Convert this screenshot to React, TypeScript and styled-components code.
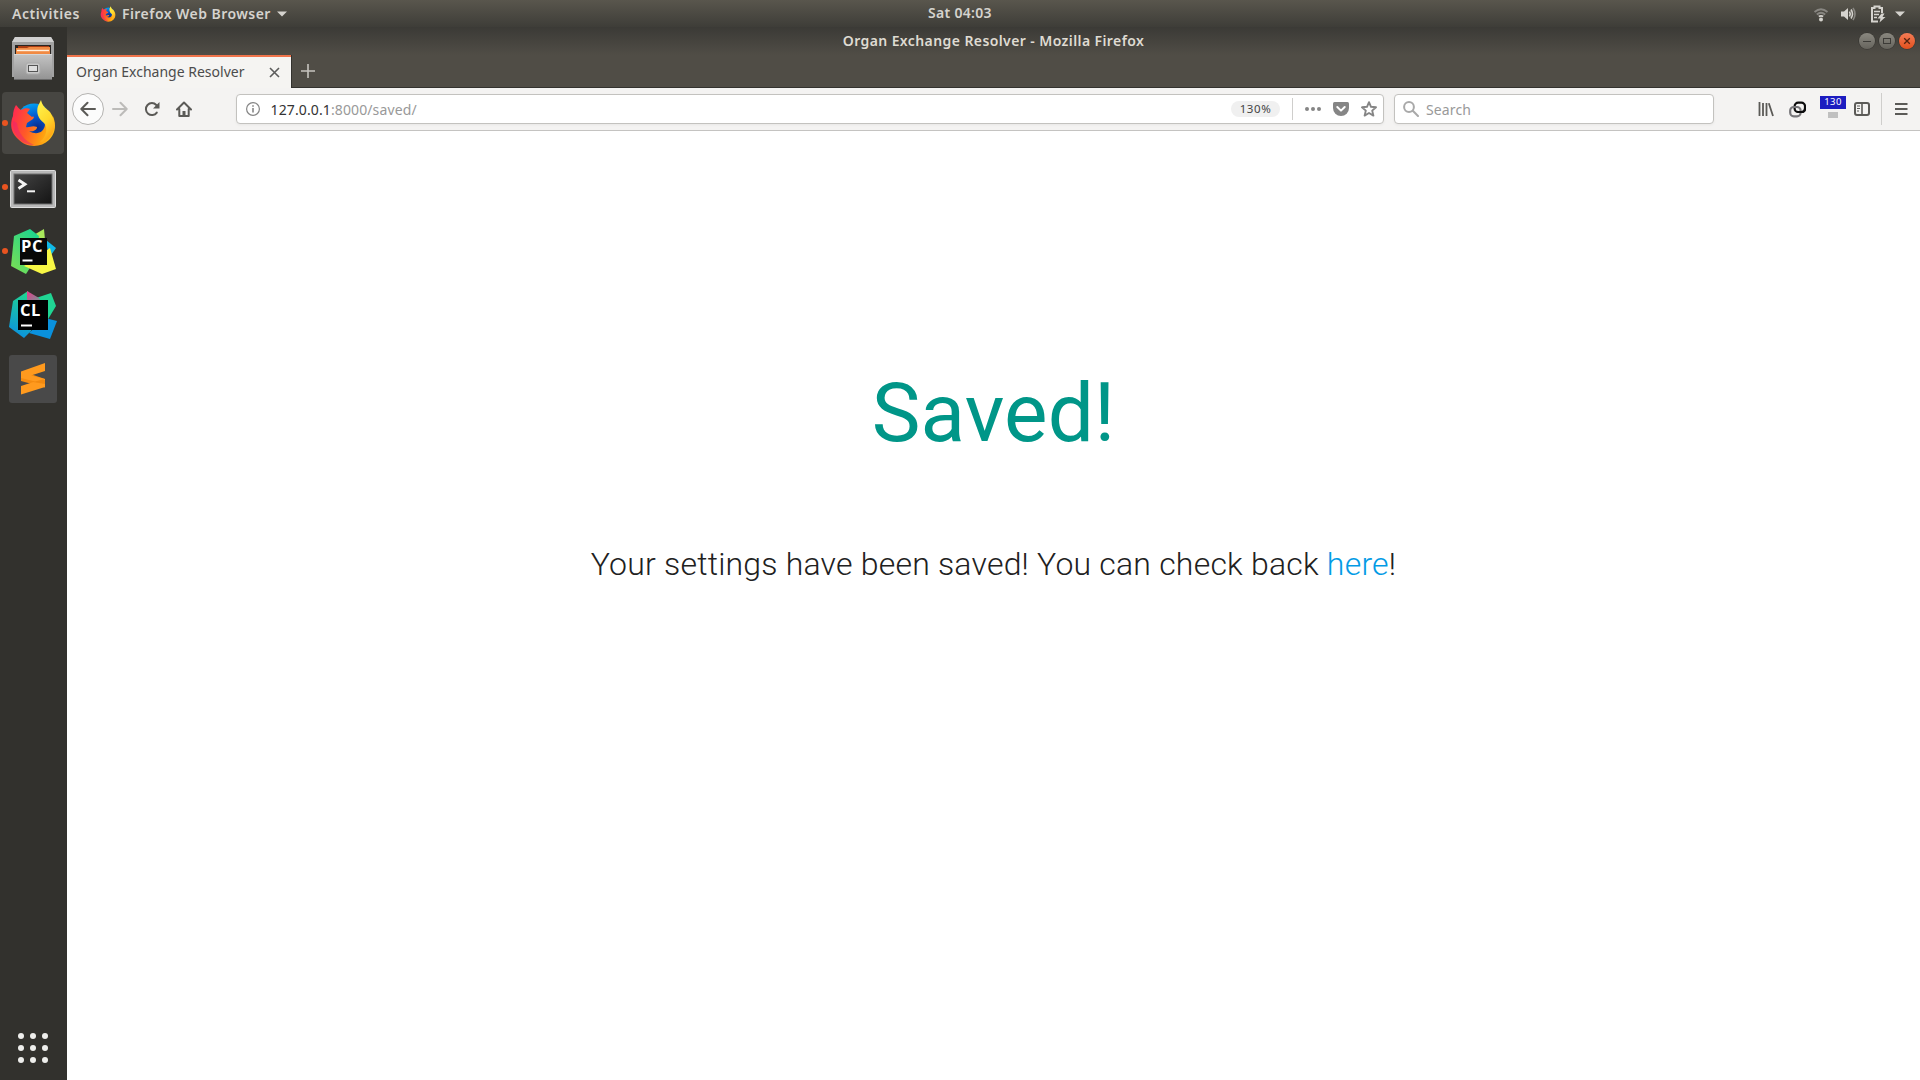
import React from "react";
import styled, { createGlobalStyle } from "styled-components";

const ui = `"Noto Sans", "Open Sans", sans-serif`;

const GlobalStyle = createGlobalStyle`
  * { box-sizing: border-box; }
  html, body { margin: 0; padding: 0; }
  body { font-family: ${ui}; overflow: hidden; background: #fff; }
  svg { display: block; flex: none; }
`;

const Desktop = styled.div`
  width: 1920px;
  height: 1080px;
  display: grid;
  grid-template: 27px 1fr / 67px 1fr;
`;

const TopBar = styled.header`
  grid-column: 1 / 3;
  display: grid;
  grid-template-columns: 1fr auto 1fr;
  align-items: center;
  background: linear-gradient(#59564d, #3e3d38);
  color: #d5d3ce;
`;

const BarSide = styled.div<{ $end?: boolean }>`
  display: flex;
  align-items: center;
  height: 27px;
  justify-content: ${(p) => (p.$end ? "flex-end" : "flex-start")};
  padding: ${(p) => (p.$end ? "0 15px 0 0" : "0 0 0 12px")};
`;

const Label = styled.span<{ $size?: number; $track?: number; $bold?: boolean }>`
  font-size: ${(p) => p.$size ?? 14}px;
  line-height: 20px;
  letter-spacing: ${(p) => p.$track ?? 0}px;
  font-weight: ${(p) => (p.$bold ? 600 : 400)};
  white-space: nowrap;
`;

const Clock = styled(Label)`
  padding-bottom: 2px;
`;

const AppMenu = styled.div`
  display: flex;
  align-items: center;
  margin-left: 20px;
  gap: 6px;
`;

const Tray = styled.div`
  display: grid;
  grid-template-columns: 27px 30px 25px 10px;
  align-items: center;
`;

const Dock = styled.nav`
  background: #32312d;
  display: flex;
  flex-direction: column;
  align-items: stretch;
`;

const DockItem = styled.div<{ $active?: boolean; $running?: boolean; $inset: number; $drop?: number }>`
  height: 62px;
  margin: 1px 3px 1px 2px;
  border-radius: 4px;
  display: flex;
  align-items: center;
  background: ${(p) => (p.$active ? "#474642" : "transparent")};
  &::before {
    content: "";
    width: 6px;
    height: 6px;
    border-radius: 50%;
    flex: none;
    background: ${(p) => (p.$running ? "#e95420" : "transparent")};
  }
  > svg {
    margin-left: ${(p) => p.$inset}px;
    margin-top: ${(p) => (p.$drop ?? 0) * 2}px;
  }
`;

const AppGrid = styled.div`
  margin: auto 0 17px 18px;
  display: grid;
  grid-template-columns: repeat(3, 6px);
  gap: 6px;
`;

const GridDot = styled.i`
  width: 6px;
  height: 6px;
  border-radius: 50%;
  background: #eeeeec;
`;

const Window = styled.main`
  display: flex;
  flex-direction: column;
  background: #fff;
`;

const TitleBar = styled.div`
  height: 28px;
  display: grid;
  grid-template-columns: 1fr auto 1fr;
  align-items: center;
  background: linear-gradient(#3b3a36, #504d46);
  color: #dfdbd2;
`;

const WindowButtons = styled.div`
  display: flex;
  justify-content: flex-end;
  gap: 4px;
  padding-right: 5px;
`;

const WindowButton = styled.span<{ $close?: boolean }>`
  width: 16px;
  height: 16px;
  border-radius: 50%;
  background: ${(p) => (p.$close ? "linear-gradient(#f47c56, #e2501d)" : "linear-gradient(#8a8880, #66645d)")};
  box-shadow: 0 0 0 0.6px #34332f;
`;

const TabStrip = styled.div`
  height: 33px;
  display: flex;
  background: #504d46;
  box-shadow: inset 0 -1px #33322e;
`;

const Tab = styled.div`
  width: 224px;
  border-top: 2px solid #f0744b;
  background: #f5f4f2;
  color: #4c4c4c;
  display: flex;
  align-items: center;
  justify-content: space-between;
  padding: 0 11px 1px 9px;
  box-shadow: 1px 0 #33322e;
`;

const NewTab = styled.div`
  padding: 9px 0 0 10px;
`;

const Toolbar = styled.div`
  height: 43px;
  display: flex;
  align-items: center;
  background: #f4f3f2;
  border-bottom: 1px solid #c4c3c1;
  padding-left: 5px;
`;

const BackButton = styled.div`
  width: 32px;
  height: 32px;
  border-radius: 50%;
  border: 1px solid #b4b3b1;
  background: #fcfcfc;
  display: flex;
  align-items: center;
  justify-content: center;
`;

const NavIcon = styled.div`
  width: 32px;
  display: flex;
  justify-content: center;
`;

const Field = styled.div<{ $width: number; $left: number }>`
  width: ${(p) => p.$width}px;
  margin-left: ${(p) => p.$left}px;
  height: 30px;
  border: 1px solid #c3c2bf;
  border-radius: 4px;
  background: #fff;
  box-shadow: 0 1px 3px rgba(0, 0, 0, 0.05);
  display: flex;
  align-items: center;
  color: #999;
`;

const FieldText = styled(Label)`
  flex: 1;
  padding-top: 2px;
  b { font-weight: 400; color: #333; }
`;

const Zoom = styled.div`
  width: 49px;
  height: 16px;
  border-radius: 8px;
  background: #f0f0f0;
  color: #444;
  display: flex;
  align-items: center;
  justify-content: center;
`;

const Divider = styled.i<{ $height: number; $margin: string }>`
  width: 1px;
  height: ${(p) => p.$height}px;
  margin: ${(p) => p.$margin};
  background: #cfcecc;
`;

const FieldIcon = styled.span<{ $margin: string }>`
  margin: ${(p) => p.$margin};
`;

const PageActions = styled.div`
  display: flex;
  align-items: center;
  gap: 12px;
  padding: 0 6px 0 12px;
`;

const Tools = styled.div`
  flex: 1;
  display: flex;
  align-items: center;
  justify-content: flex-end;
  padding-right: 12px;
`;

const Meter = styled.div`
  width: 26px;
  display: flex;
  flex-direction: column;
  align-items: center;
  margin: 0 8px 0 14px;
  padding-bottom: 5px;
  gap: 3px;
`;

const MeterValue = styled.div`
  width: 26px;
  height: 13px;
  background: #1c1cc0;
  color: #fff;
  display: flex;
  align-items: center;
  justify-content: center;
`;

const MeterBar = styled.i`
  width: 10px;
  height: 6px;
  background: #c0c0c0;
`;

const Page = styled.section`
  flex: 1;
  display: flex;
  flex-direction: column;
  align-items: center;
  font-family: Roboto, sans-serif;
`;

const Heading = styled.h1`
  margin: 237px 0 0;
  font-size: 82px;
  line-height: 90px;
  font-weight: 400;
  letter-spacing: 0.15px;
  color: #009688;
`;

const Message = styled.p`
  margin: 86px 0 0;
  font-size: 32px;
  line-height: 40px;
  font-weight: 300;
  letter-spacing: 0.2px;
  color: #212121;
  white-space: nowrap;
`;

const Link = styled.a`
  color: #039be5;
`;

const FirefoxIcon = ({ size }: { size: number }) => (
  <svg width={size} height={size} viewBox="0 0 46 48">
    <defs>
      <linearGradient id="foxBody" x1="0" y1="0.3" x2="1" y2="0.6">
        <stop offset="0" stopColor="#ff2a50" />
        <stop offset="0.4" stopColor="#ff5a28" />
        <stop offset="0.75" stopColor="#ff9a10" />
        <stop offset="1" stopColor="#ffc018" />
      </linearGradient>
      <linearGradient id="foxTail" x1="0.3" y1="0" x2="0.7" y2="1">
        <stop offset="0" stopColor="#fff04a" />
        <stop offset="0.5" stopColor="#ffd92c" />
        <stop offset="1" stopColor="#ff9812" />
      </linearGradient>
      <radialGradient id="foxGlobe" cx="0.6" cy="0.7" r="0.7">
        <stop offset="0" stopColor="#0b2a86" />
        <stop offset="0.5" stopColor="#0458d0" />
        <stop offset="1" stopColor="#009cf0" />
      </radialGradient>
    </defs>
    <circle cx="24" cy="22" r="17.5" fill="url(#foxGlobe)" />
    <path d="M6 6C8 8 9 10 11 11C14 9 18 9 20 10L17 14L22 18C24 17 24.5 18 23 20L17 24L16 28C19 29 22 26 27 28C27 31 23 33 19 32C27 37 34 33 35 26C41 25 44 18 42 15C48 27 44 36 39 41C31 49 16 49 8 40C0 33 0 24 3 17C3 13 4 9 6 6Z" fill="url(#foxBody)" />
    <path d="M3 22C2 36 12 46 24 46C15 42 8 34 7 24Z" fill="#e91e78" opacity="0.45" />
    <path d="M31 1C32 7 37 10 40 13C45 20 46 28 42 35C39 40 34 43 30 43C37 37 38 29 34 24C28 20 26 13 28 7Z" fill="url(#foxTail)" />
  </svg>
);

const FilesIcon = () => (
  <svg width="44" height="46" viewBox="0 0 44 46">
    <defs>
      <linearGradient id="drawer" x1="0" y1="0" x2="0" y2="1">
        <stop offset="0" stopColor="#c4c4c4" />
        <stop offset="1" stopColor="#929292" />
      </linearGradient>
    </defs>
    <path d="M3 2H39L42 7V42H0V7Z" fill="#a2a2a2" />
    <path d="M3 2H39L42 7H0Z" fill="#d0d0d0" />
    <path d="M3 10H39V20H3Z" fill="#292522" />
    <path d="M6 11H37V14H6Z" fill="#a93c12" />
    <path d="M4 13H15L17 12H38V20H4Z" fill="#f18a43" />
    <path d="M5 15.5H37" stroke="#fff0df" strokeWidth="1.4" />
    <path d="M2 19H40V45H2Z" fill="url(#drawer)" />
    <path d="M2 19.5H40" stroke="#d6d6d6" />
    <path d="M2 44.5H40" stroke="#6a6a6a" />
    <rect x="14" y="28" width="14" height="11" rx="2" fill="#c9c9c9" stroke="#aaa" />
    <rect x="16.5" y="30.5" width="9" height="6" fill="#dedede" stroke="#555" />
  </svg>
);

const TerminalIcon = () => (
  <svg width="46" height="38" viewBox="0 0 46 38">
    <defs>
      <linearGradient id="screen" x1="0" y1="0" x2="1" y2="1">
        <stop offset="0" stopColor="#454545" />
        <stop offset="0.5" stopColor="#2c2c2c" />
        <stop offset="1" stopColor="#141414" />
      </linearGradient>
    </defs>
    <rect x="0.5" y="0.5" width="45" height="37" rx="1" fill="#b8b8b8" stroke="#dedede" />
    <rect x="4" y="4" width="38" height="30" fill="url(#screen)" stroke="#6f6f6f" />
    <path d="M8.5 10L15 14.2L8.5 18.5" fill="none" stroke="#f4f4f4" strokeWidth="2.8" />
    <path d="M17 21.3H25" stroke="#f4f4f4" strokeWidth="2" />
  </svg>
);

const LogoText = styled.text`
  font: 700 16.5px "Open Sans", sans-serif;
  letter-spacing: 0.6px;
  fill: #fff;
`;

const PyCharmIcon = () => (
  <svg width="46" height="46" viewBox="0 0 46 46">
    <defs>
      <linearGradient id="pyGreen" x1="0" y1="1" x2="0.7" y2="0">
        <stop offset="0" stopColor="#80e050" />
        <stop offset="1" stopColor="#20d58c" />
      </linearGradient>
    </defs>
    <path d="M22 8L34 1L35 12L25 16Z" fill="#a9e85b" />
    <path d="M36 12L46 20L39 30Z" fill="#10b9e8" />
    <path d="M4 8L20 1L29 8L25 32L16 46L1 38Z" fill="url(#pyGreen)" />
    <path d="M14 38L40 20L46 41L32 46Z" fill="#f8f745" />
    <rect x="10" y="10" width="27" height="27" fill="#080808" />
    <LogoText x="11" y="23.5">PC</LogoText>
    <path d="M12.5 32.5H22.5" stroke="#fff" strokeWidth="2" />
  </svg>
);

const CLionIcon = () => (
  <svg width="48" height="48" viewBox="0 0 48 48">
    <defs>
      <linearGradient id="clLeft" x1="0.6" y1="0" x2="0.4" y2="1">
        <stop offset="0" stopColor="#20d58f" />
        <stop offset="1" stopColor="#0b91df" />
      </linearGradient>
      <linearGradient id="clPink" x1="0" y1="0" x2="1" y2="1">
        <stop offset="0" stopColor="#ed358c" />
        <stop offset="1" stopColor="#5ba993" />
      </linearGradient>
    </defs>
    <path d="M27 7L42 2L47 15L38 30L26 22Z" fill="#20d593" />
    <path d="M4 10L19 0L24 15L22 40L15 47L0 36Z" fill="url(#clLeft)" />
    <path d="M18 0L30 7L33 12L18 12Z" fill="url(#clPink)" />
    <path d="M36 27L48 30L41 48L20 42Z" fill="#0a91dd" />
    <rect x="9" y="9" width="30" height="30" fill="#000" />
    <LogoText x="11" y="25">CL</LogoText>
    <path d="M12 34.5H23" stroke="#fff" strokeWidth="2" />
  </svg>
);

const SublimeIcon = () => (
  <svg width="48" height="48" viewBox="0 0 48 48">
    <rect width="48" height="48" rx="3" fill="#494949" />
    <path d="M12 26L36 32.5V24L20 18.5L12 20Z" fill="#f48b10" />
    <path d="M12 16.5L36 8V16L22 20.5L36 24V32L12 39.5V31L26 26.5L12 23Z" fill="#ff9a1e" />
    <path d="M24 27L34 24.5L36 25V29Z" fill="#e57c06" opacity="0.55" />
  </svg>
);

const Caret = () => (
  <svg width="10" height="6" viewBox="0 0 10 6"><path d="M0 0.5H10L5 5.5Z" fill="#d5d3ce" /></svg>
);

const App = () => (
  <>
    <GlobalStyle />
    <Desktop>
      <TopBar>
        <BarSide>
          <Label $bold $track={0.55}>Activities</Label>
          <AppMenu>
            <FirefoxIcon size={16} />
            <Label $bold $track={0.45}>Firefox Web Browser</Label>
            <Caret />
          </AppMenu>
        </BarSide>
        <Clock $bold $track={0.3}>Sat 04:03</Clock>
        <BarSide $end>
          <Tray>
            <svg width="16" height="16" viewBox="0 0 16 16" fill="none" strokeWidth="1.8">
              <path d="M1.5 6Q8 0.5 14.5 6M3.8 8.5Q8 5 12.2 8.5" stroke="#888681" />
              <path d="M5.8 10.6Q8 9 10.2 10.6" stroke="#d5d3ce" />
              <circle cx="8" cy="13.5" r="2" fill="#d5d3ce" />
            </svg>
            <svg width="16" height="16" viewBox="0 0 16 16" fill="none" strokeWidth="1.6">
              <path d="M1 5.5H4L8 2V14L4 10.5H1Z" fill="#d5d3ce" />
              <path d="M9.5 5.5Q11 8 9.5 10.5M11 3.5Q14 8 11 12.5" stroke="#d5d3ce" />
              <path d="M13 2Q17 8 13 14" stroke="#888681" />
            </svg>
            <svg width="16" height="18" viewBox="0 0 16 18" fill="none" stroke="#d5d3ce">
              <path d="M12 8V3H9.5V1.5H4.5V3H2V16.5H8" strokeWidth="2" />
              <path d="M4 6.5H10M4 9.5H9M4 12.5H7" strokeWidth="1.6" />
              <path d="M11.5 8.5L7.5 13.5H10.5L9.5 17.5L15.5 12H12.5L14.5 8.5Z" fill="#d5d3ce" stroke="none" />
            </svg>
            <Caret />
          </Tray>
        </BarSide>
      </TopBar>

      <Dock>
        <DockItem $inset={4} $drop={-1}><FilesIcon /></DockItem>
        <DockItem $active $running $inset={1} $drop={-0.5}><FirefoxIcon size={48} /></DockItem>
        <DockItem $running $inset={2} $drop={2}><TerminalIcon /></DockItem>
        <DockItem $running $inset={2}><PyCharmIcon /></DockItem>
        <DockItem $inset={1}><CLionIcon /></DockItem>
        <DockItem $inset={1}><SublimeIcon /></DockItem>
        <AppGrid>{Array.from({ length: 9 }, (_, i) => <GridDot key={i} />)}</AppGrid>
      </Dock>

      <Window>
        <TitleBar>
          <span />
          <Label $bold $track={0.41}>Organ Exchange Resolver - Mozilla Firefox</Label>
          <WindowButtons>
            <WindowButton>
              <svg width="16" height="16"><path d="M4 8.5H12" stroke="#3c3b37" /></svg>
            </WindowButton>
            <WindowButton>
              <svg width="16" height="16"><rect x="4.5" y="5.5" width="7" height="5" fill="none" stroke="#3c3b37" /></svg>
            </WindowButton>
            <WindowButton $close>
              <svg width="16" height="16"><path d="M5.2 5.2L10.8 10.8M10.8 5.2L5.2 10.8" stroke="#54230f" strokeWidth="1.3" /></svg>
            </WindowButton>
          </WindowButtons>
        </TitleBar>
        <TabStrip>
          <Tab>
            <Label>Organ Exchange Resolver</Label>
            <svg width="11" height="11" viewBox="0 0 11 11"><path d="M1 1L10 10M10 1L1 10" stroke="#5c5c5c" strokeWidth="1.6" /></svg>
          </Tab>
          <NewTab>
            <svg width="14" height="14" viewBox="0 0 14 14"><path d="M7 0V14M0 7H14" stroke="#c6c4be" strokeWidth="1.6" /></svg>
          </NewTab>
        </TabStrip>
        <Toolbar>
          <BackButton>
            <svg width="16" height="16" viewBox="0 0 16 16" fill="none" stroke="#5b5a57" strokeWidth="2" strokeLinecap="round" strokeLinejoin="round"><path d="M15 8H1.5M7.5 1.8L1.3 8L7.5 14.2" /></svg>
          </BackButton>
          <NavIcon>
            <svg width="16" height="16" viewBox="0 0 16 16" fill="none" stroke="#bcbbb9" strokeWidth="2" strokeLinecap="round" strokeLinejoin="round"><path d="M1 8H14.5M8.5 1.8L14.7 8L8.5 14.2" /></svg>
          </NavIcon>
          <NavIcon>
            <svg width="16" height="16" viewBox="0 0 16 16" fill="none" stroke="#5b5a57" strokeWidth="2" strokeLinecap="round"><path d="M12.8 11.6A6 6 0 1 1 12.3 4" /><path d="M15.5 1V7.5H9Z" fill="#5b5a57" stroke="none" /></svg>
          </NavIcon>
          <NavIcon>
            <svg width="16" height="16" viewBox="0 0 16 16" fill="none" stroke="#5b5a57" strokeWidth="2" strokeLinejoin="round" strokeLinecap="round"><path d="M1 8.5L8 1.5L15 8.5M3.3 8V15H12.7V8" /><path d="M6.5 15V10H9.5V15Z" fill="#5b5a57" stroke="none" /></svg>
          </NavIcon>
          <Field $width={1148} $left={36}>
            <FieldIcon $margin="0 10.5px 0 9px">
              <svg width="14" height="14" viewBox="0 0 14 14"><circle cx="7" cy="7" r="6.4" fill="none" stroke="#858585" strokeWidth="1.2" /><path d="M7 6V10.5M7 3.2V4.8" stroke="#858585" strokeWidth="1.6" /></svg>
            </FieldIcon>
            <FieldText $track={0.12}><b>127.0.0.1</b>:8000/saved/</FieldText>
            <Zoom><Label $size={11.5} $track={0.6}>130%</Label></Zoom>
            <Divider $height={22} $margin="0 0 0 12px" />
            <PageActions>
              <svg width="16" height="16" viewBox="0 0 16 16" fill="#858585"><circle cx="2" cy="8" r="2" /><circle cx="8" cy="8" r="2" /><circle cx="14" cy="8" r="2" /></svg>
              <svg width="16" height="16" viewBox="0 0 16 16"><path d="M1.5 1H14.5Q16 1 16 2.5V7A8 8 0 0 1 0 7V2.5Q0 1 1.5 1Z" fill="#858585" /><path d="M4.3 6L8 9.6L11.7 6" fill="none" stroke="#fff" strokeWidth="2" strokeLinecap="round" strokeLinejoin="round" /></svg>
              <svg width="16" height="16" viewBox="0 0 16 16"><path d="M8 1.2L10 5.8L15 6.3L11.2 9.6L12.4 14.6L8 12L3.6 14.6L4.8 9.6L1 6.3L6 5.8Z" fill="none" stroke="#858585" strokeWidth="1.9" strokeLinejoin="round" /></svg>
            </PageActions>
          </Field>
          <Field $width={320} $left={10}>
            <FieldIcon $margin="0 7px 0 8px">
              <svg width="16" height="16" viewBox="0 0 16 16" fill="none" stroke="#a9a9a9" strokeWidth="2" strokeLinecap="round"><circle cx="6" cy="6" r="4.9" /><path d="M9.8 9.8L15 15" /></svg>
            </FieldIcon>
            <FieldText $track={0.12}>Search</FieldText>
          </Field>
          <Tools>
            <svg width="16" height="16" viewBox="0 0 16 16" stroke="#5b5a57" strokeWidth="1.8"><path d="M1.5 1V15M5 2V15M8.5 2V15M10.8 2.2L15 15" /></svg>
            <FieldIcon $margin="0 0 0 15px">
              <svg width="17" height="17" viewBox="0 0 17 17" fill="none" strokeWidth="2.2">
                <rect x="5.6" y="1.6" width="10.4" height="9.4" rx="3.6" stroke="#0c0c0d" />
                <rect x="1.2" y="6" width="10.4" height="9.4" rx="3.6" stroke="#77767a" />
                <path d="M8.5 11H12.4Q16 11 16 7.4" stroke="#0c0c0d" />
              </svg>
            </FieldIcon>
            <Meter>
              <MeterValue><Label $size={9.5} $track={0.4}>130</Label></MeterValue>
              <MeterBar />
            </Meter>
            <svg width="16" height="16" viewBox="0 0 16 16" fill="none" stroke="#5b5a57"><rect x="1" y="2" width="14" height="12" rx="2" strokeWidth="2" /><path d="M8 2V14" strokeWidth="1.6" /><path d="M3 5H6M3 7.5H6M3 10H5" /></svg>
            <Divider $height={32} $margin="0 13px 0 11px" />
            <svg width="13" height="14" viewBox="0 0 13 14" stroke="#5b5a57" strokeWidth="2"><path d="M0 2H12.5M0 7H12.5M0 12H12.5" /></svg>
          </Tools>
        </Toolbar>
        <Page>
          <Heading>Saved!</Heading>
          <Message>Your settings have been saved! You can check back <Link>here</Link>!</Message>
        </Page>
      </Window>
    </Desktop>
  </>
);

export default App;
